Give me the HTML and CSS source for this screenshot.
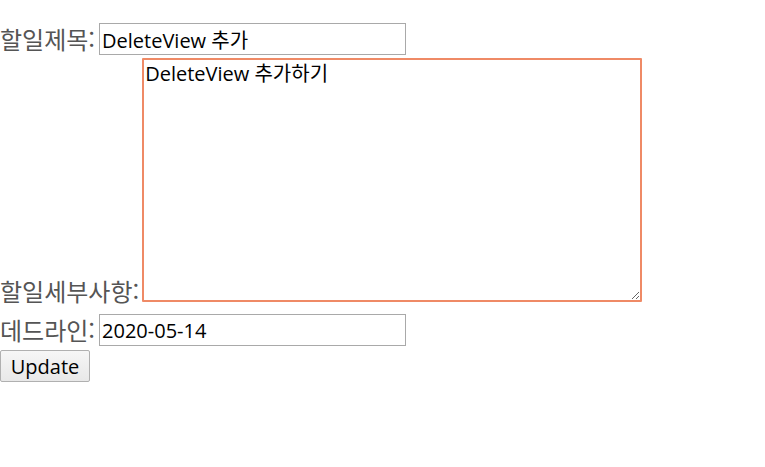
FILE: index.html
```html
<!DOCTYPE html>
<html lang="ko">
<head>
<meta charset="utf-8">
<link rel="stylesheet" href="styles.css">
</head>
<body>
<form class="form">
  <div class="row row-title">
    <label class="label">할일제목:</label>
    <input class="field" type="text" value="DeleteView 추가">
  </div>
  <div class="row row-detail">
    <label class="label">할일세부사항:</label>
    <textarea class="area">DeleteView 추가하기</textarea>
  </div>
  <div class="row row-date">
    <label class="label">데드라인:</label>
    <input class="field" type="text" value="2020-05-14">
  </div>
  <button class="btn" type="button">Update</button>
</form>
</body>
</html>
```
FILE: styles.css
```css
html, body {
  margin: 0;
  padding: 0;
  background: #fff;
}
.form {
  padding-top: 23px;
  font-family: "Open Sans", "Noto Sans CJK KR", sans-serif;
}
.row {
  display: flex;
  gap: 4px;
}
.row-title {
  align-items: center;
  margin-bottom: 3px;
}
.row-detail {
  align-items: flex-end;
  gap: 3px;
  margin-bottom: 12px;
}
.row-date {
  align-items: center;
  margin-bottom: 4px;
}
.label {
  font-family: "Noto Sans CJK KR", "Open Sans", sans-serif;
  font-size: 24px;
  line-height: 28px;
  color: #555;
  white-space: nowrap;
}
.row-detail .label {
  margin-bottom: -3px;
}
.field {
  box-sizing: border-box;
  width: 307px;
  height: 32px;
  margin: 0;
  padding: 0 2px;
  border: 1px solid #a9a9a9;
  font-family: "Open Sans", "Noto Sans CJK KR", sans-serif;
  font-size: 20px;
  color: #000;
  outline: none;
}
.area {
  box-sizing: border-box;
  width: 500px;
  height: 244px;
  margin: 0;
  padding: 2px 1px;
  border: 2px solid #ef8a66;
  border-radius: 1px;
  font-family: "Open Sans", "Noto Sans CJK KR", sans-serif;
  font-size: 20px;
  line-height: 24px;
  color: #000;
  outline: none;
  resize: both;
}
.btn {
  box-sizing: border-box;
  width: 90px;
  height: 32px;
  margin: 0;
  padding: 0;
  border: 1px solid #b0b0b0;
  border-radius: 2px;
  background: linear-gradient(#f6f6f6, #e8e8e8);
  font-family: "Open Sans", sans-serif;
  font-size: 20px;
  color: #000;
}
```
